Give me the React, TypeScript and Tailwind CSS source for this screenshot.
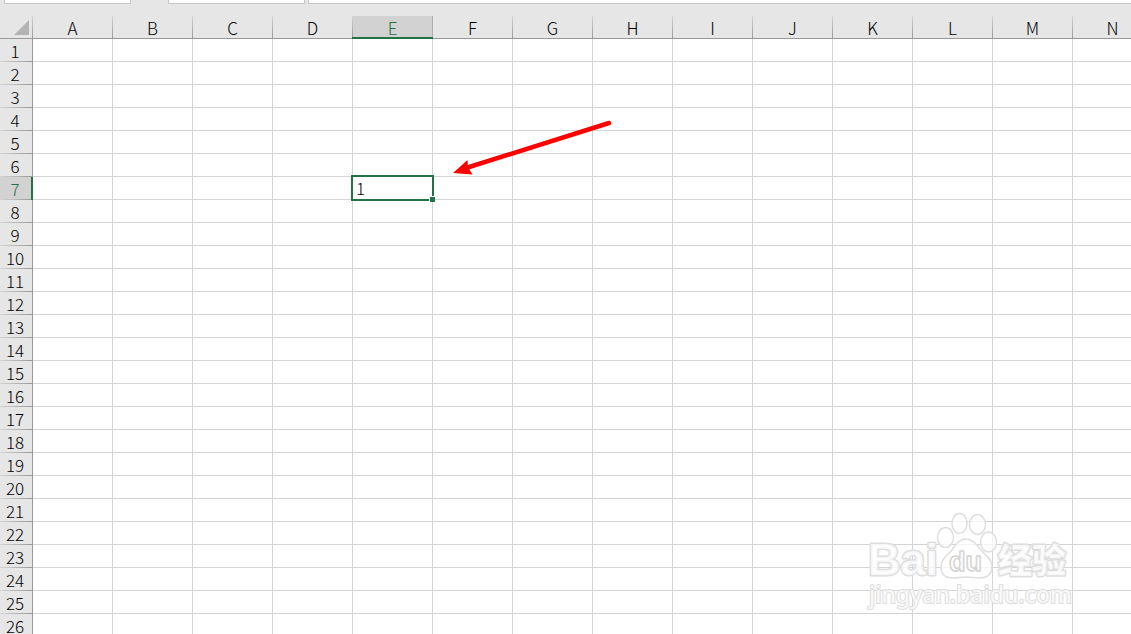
import React, { useState } from 'react'

const COLUMNS = ['A', 'B', 'C', 'D', 'E', 'F', 'G', 'H', 'I', 'J', 'K', 'L', 'M', 'N']
const ROWS = Array.from({ length: 26 }, (_, i) => i + 1)

const CELLS: Record<string, string> = {
  E7: '1'
}

interface HeaderProps {
  label: string | number
  active: boolean
}

const ColumnHeader: React.FC<HeaderProps> = ({ label, active }) => (
  <th
    scope="col"
    className={`relative h-[23px] border-b p-0 font-light leading-[22px] ${
      active ? 'border-[#217346] bg-[#d2d2d2] text-[#217346]' : 'border-[#999999]'
    }`}
  >
    <div className="h-[22px] pt-px pr-px">{label}</div>
    <span
      className={`absolute inset-y-0 right-0 w-px ${
        active ? 'bg-[#ababab]' : 'bg-linear-to-b from-[#d4d4d4] to-[#999999]'
      }`}
    />
    {active && <span className="absolute -left-px right-0 -bottom-px h-0.5 bg-[#217346]" />}
  </th>
)

const RowHeader: React.FC<HeaderProps> = ({ label, active }) => (
  <th
    scope="row"
    className={`relative h-[23px] border-r p-0 font-light leading-[22px] ${
      active ? 'border-[#217346] bg-[#d2d2d2] text-[#217346]' : 'border-[#999999] bg-[#e6e6e6]'
    }`}
  >
    <div className="h-[22px] pr-0.5">{label}</div>
    <span className="absolute inset-x-0 bottom-0 h-px bg-linear-to-r from-[#d4d4d4] to-[#999999]" />
    {active && <span className="absolute -right-px top-0 bottom-0 w-0.5 bg-[#217346]" />}
  </th>
)

const Watermark: React.FC = () => (
  <svg
    className="pointer-events-none absolute right-[51px] bottom-4 z-20 h-[110px] w-[220px]"
    viewBox="0 0 220 110"
    fill="#ffffff"
    fillOpacity="0.75"
    stroke="#dedede"
    strokeWidth="1.5"
    strokeLinejoin="round"
  >
    <ellipse cx="85.500" cy="29.500" rx="8" ry="10" />
    <ellipse cx="99.500" cy="15.500" rx="7.500" ry="10" />
    <ellipse cx="117.500" cy="16.500" rx="8" ry="10" />
    <ellipse cx="128.500" cy="34" rx="8" ry="10" />
    <path d="M106 31c-7 0-10 5-14 11-5 6-11 9-11 17 0 8 5 11 12 11 5 0 8-1 13-1s9 1 13 1c8 0 13-4 13-12 0-7-6-10-11-16-4-5-8-11-15-11z" />
    <g paintOrder="stroke" strokeWidth="3">
      <text x="8" y="67" fontSize="45" fontWeight="700" fontFamily="Liberation Sans">Bai</text>
      <text x="138" y="65" fontSize="34" fontWeight="900" fontFamily="Noto Sans CJK SC">经验</text>
      <text x="9" y="95" fontSize="23" fontWeight="500" strokeWidth="2" fontFamily="Noto Sans">jingyan.baidu.com</text>
    </g>
    <text x="89" y="63" fontSize="27" fontWeight="700" stroke="#d4d4d4" fontFamily="Liberation Sans">du</text>
  </svg>
)

const App: React.FC = () => {
  const [selected, setSelected] = useState({ column: 'E', row: 7 })

  return (
    <main className="relative h-screen overflow-hidden bg-white font-['Noto_Sans_CJK_SC',sans-serif] text-[17px] font-light text-black">
      {/* Нижний край строки формул */}
      <div className="flex h-4 items-start bg-[#e6e6e6]">
        <div className="ml-1 h-1 w-[127px] border border-t-0 border-[#c6c6c6] bg-white" />
        <div className="ml-[37px] h-1 w-[137px] border border-t-0 border-[#c6c6c6] bg-white" />
        <div className="ml-[3px] h-1 flex-1 border-b border-l border-[#c6c6c6] bg-white" />
      </div>

      <table className="w-[1153px] table-fixed border-separate border-spacing-0 text-center">
        <thead>
          <tr className="bg-[#e6e6e6]">
            <td className="relative h-[23px] w-[33px] border-b border-[#999999] p-0">
              <svg className="absolute right-1 bottom-[3px] size-[15px]" viewBox="0 0 15 15">
                <path d="M15 0v15H0z" fill="#b4b4b4" />
              </svg>
              <span className="absolute inset-y-0 right-0 w-px bg-linear-to-b from-[#d4d4d4] to-[#999999]" />
            </td>
            {COLUMNS.map((column) => (
              <ColumnHeader key={column} label={column} active={column === selected.column} />
            ))}
          </tr>
        </thead>
        <tbody>
          {ROWS.map((row) => (
            <tr key={row}>
              <RowHeader label={row} active={row === selected.row} />
              {COLUMNS.map((column) => {
                const isSelected = column === selected.column && row === selected.row

                return (
                  <td
                    key={column}
                    onClick={() => setSelected({ column, row })}
                    className="relative h-[23px] border-r border-b border-[#d4d4d4] p-0 text-left leading-[22px]"
                  >
                    <div className="h-[22px] pl-[3px]">{CELLS[`${column}${row}`]}</div>
                    {isSelected && (
                      <div className="absolute -inset-0.5 z-10 border-2 border-[#217346]">
                        <span className="absolute -right-[3px] -bottom-[3px] size-1.5 border-t border-l border-white bg-[#217346]" />
                      </div>
                    )}
                  </td>
                )
              })}
            </tr>
          ))}
        </tbody>
      </table>

      {/* Стрелка-указатель на выбранную ячейку */}
      <svg
        className="pointer-events-none absolute top-[118px] left-[450px] z-20 h-[60px] w-[165px]"
        viewBox="0 0 165 60"
      >
        <path d="M159 5 16 50" stroke="#ff0000" strokeWidth="4.500" strokeLinecap="round" />
        <path d="M3 55 17.500 42 18 49l4.500 7.500z" fill="#ff0000" />
      </svg>

      <Watermark />
    </main>
  )
}

export default App
